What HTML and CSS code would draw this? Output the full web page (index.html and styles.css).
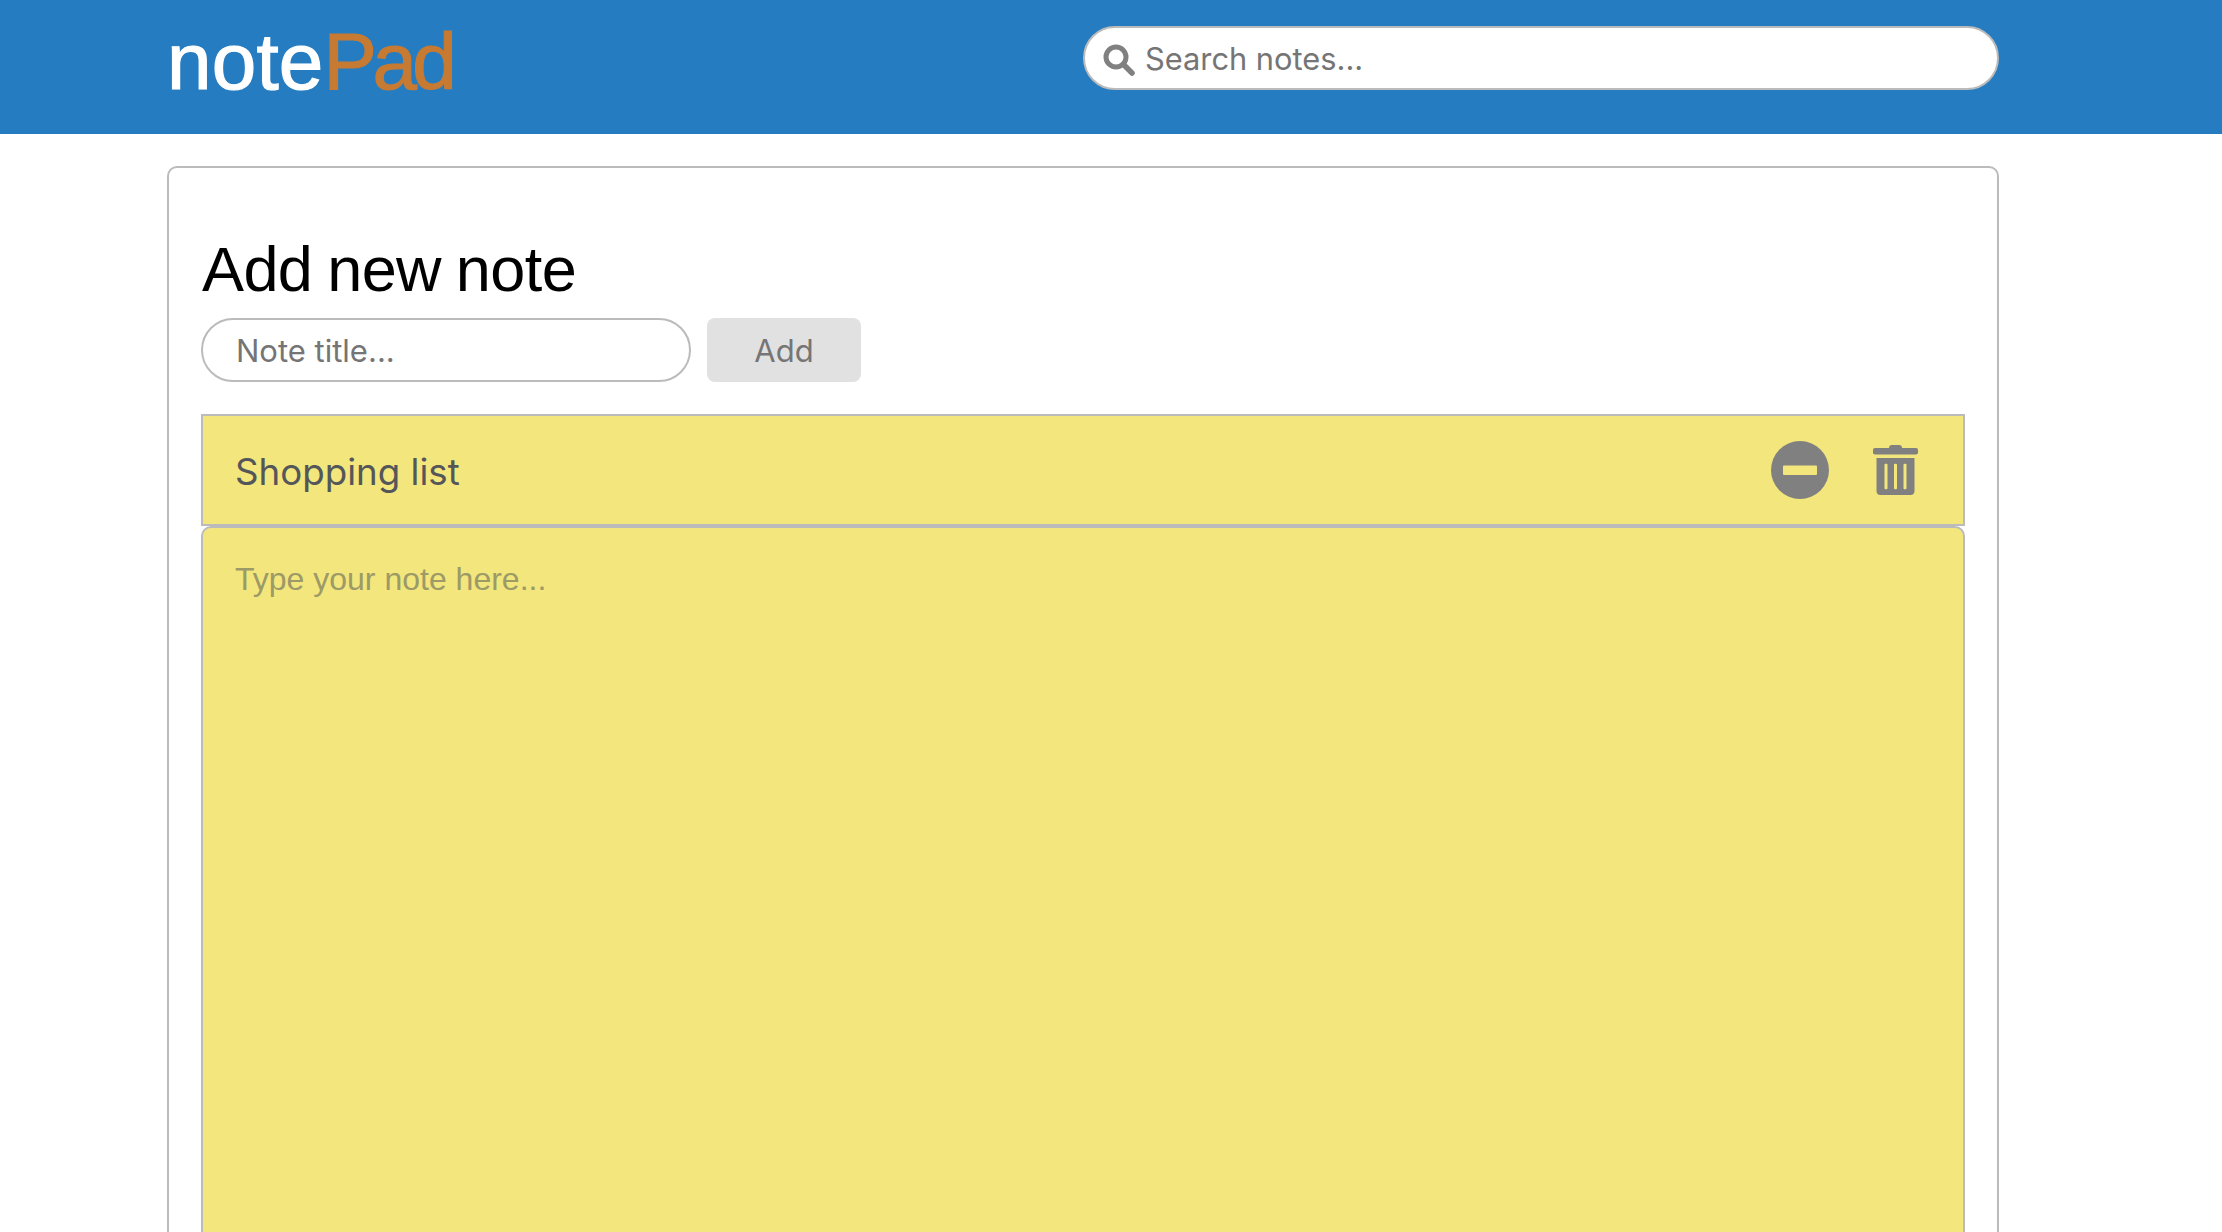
FILE: index.html
```html
<!DOCTYPE html>
<html lang="en">
<head>
<meta charset="utf-8">
<title>notePad</title>
<link rel="stylesheet" href="styles.css">
</head>
<body>
<header class="topbar">
  <div class="topbar-inner">
    <h1 class="logo">note<span class="logo-accent">Pad</span></h1>
    <div class="search">
      <svg class="search-icon" viewBox="0 0 32 32" aria-hidden="true">
        <circle cx="13" cy="13" r="10" fill="none" stroke="#808080" stroke-width="5"/>
        <path d="M20.5 20.5 L29 29" fill="none" stroke="#808080" stroke-width="5.5" stroke-linecap="round"/>
      </svg>
      <input class="search-input" type="text" placeholder="Search notes...">
    </div>
  </div>
</header>
<main class="card">
  <h2 class="card-title">Add new note</h2>
  <form class="add-form">
    <input class="title-input" type="text" placeholder="Note title...">
    <button class="add-button" type="button">Add</button>
  </form>
  <section class="note">
    <div class="note-header">
      <span class="note-title">Shopping list</span>
      <div class="note-actions">
        <svg class="icon-minus" viewBox="0 0 58 58" aria-hidden="true">
          <circle cx="29" cy="29" r="29" fill="#808080"/>
          <rect x="12" y="24.5" width="34" height="9.5" rx="1" fill="#f2e67c"/>
        </svg>
        <svg class="icon-trash" viewBox="0 0 45 50" aria-hidden="true">
          <path d="M16 3 C16 1 17 0 19 0 H26 C28 0 29 1 29 3 H43 C44.2 3 45 3.8 45 5 V7.500 C45 8.700 44.200 9.500 43 9.500 H2 C0.800 9.500 0 8.700 0 7.500 V5 C0 3.800 0.800 3 2 3 Z" fill="#808080"/>
          <path fill-rule="evenodd" d="M3.500 13 H41.500 V46 C41.500 48.500 40 50 37.500 50 H7.500 C5 50 3.500 48.500 3.500 46 Z M11.500 19.500 V43.500 C11.500 44.500 14.500 44.500 14.500 43.500 V19.500 C14.500 18.500 11.500 18.500 11.500 19.500 Z M21 19.500 V43.500 C21 44.500 24 44.500 24 43.500 V19.500 C24 18.500 21 18.500 21 19.500 Z M30.500 19.500 V43.500 C30.500 44.500 33.500 44.500 33.500 43.500 V19.500 C33.500 18.500 30.500 18.500 30.500 19.500 Z" fill="#808080"/>
        </svg>
      </div>
    </div>
    <textarea class="note-body" placeholder="Type your note here..."></textarea>
  </section>
</main>
</body>
</html>
```
FILE: styles.css
```css
* { box-sizing: border-box; }
html { overflow: hidden; }
body { margin: 0; background: #fff; font-family: "Liberation Sans", Arial, sans-serif; }

.topbar { height: 134px; background: #267cc0; }
.topbar-inner { width: 1832px; margin-left: 167px; height: 100%; display: flex; justify-content: space-between; align-items: flex-start; }
.logo { margin: 17px 0 0; font-size: 80px; line-height: 90px; font-weight: 400; color: #fff; letter-spacing: 0.2px; -webkit-text-stroke: 1.2px currentColor; }
.logo-accent { color: #c77a32; letter-spacing: -4.5px; }

.search { position: relative; margin-top: 26px; width: 916px; }
.search-icon { position: absolute; left: 20px; top: 18px; width: 32px; height: 32px; }
.search-input { display: block; width: 100%; height: 64px; padding: 0 20px 0 60px; border: 2px solid #bbb; border-radius: 32px; background: #fff; font-family: Inter, sans-serif; font-size: 30.8px; color: #757575; outline: none; }
input::placeholder { color: #757575; opacity: 1; }

.card { width: 1832px; height: 1400px; margin: 32px 0 0 167px; padding: 66px 32px 0; border: 2px solid #bbb; border-radius: 10px; }
.card-title { margin: 0 0 14px 1px; font-size: 63px; line-height: 70px; font-weight: 400; color: #000; letter-spacing: -0.6px; word-spacing: -2px; }

.add-form { display: flex; gap: 16px; margin-bottom: 32px; }
.title-input { width: 490px; height: 64px; padding: 0 32px 0 33px; border: 2px solid #bbb; border-radius: 32px; background: #fff; font-family: Inter, sans-serif; font-size: 31px; color: #757575; outline: none; }
.add-button { width: 154px; height: 64px; border: 0; border-radius: 8px; background: #e1e1e1; font-family: Inter, sans-serif; font-size: 31px; color: #757575; }

.note-header { height: 112px; display: flex; justify-content: space-between; align-items: center; padding: 0 45px 0 32px; background: #f2e67c; border: 2px solid #bbb; }
.note-title { padding-top: 2px; font-family: Inter, sans-serif; font-size: 36.7px; color: #55565a; }
.note-actions { display: flex; align-items: center; gap: 44px; }
.icon-minus { width: 58px; height: 58px; display: block; }
.icon-trash { width: 45px; height: 50px; display: block; }

.note-body { display: block; width: 100%; height: 1000px; padding: 33px 32px; border: 2px solid #bbb; border-radius: 10px; background: #f2e67c; font-family: "Liberation Sans", Arial, sans-serif; font-size: 32px; line-height: 36px; resize: none; outline: none; }
.note-body::placeholder { color: #9c9a67; opacity: 1; }
```
